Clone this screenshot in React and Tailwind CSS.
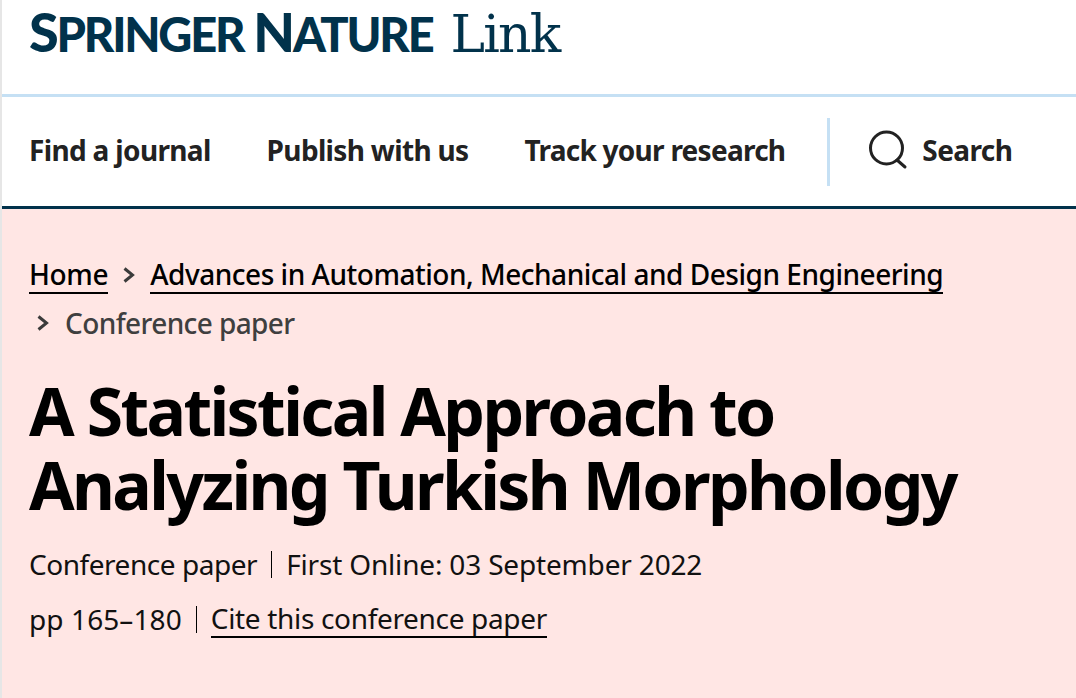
import React from 'react';

const sans = "font-['Noto_Sans',sans-serif]";

function Chevron({ className }) {
  return (
    <svg viewBox="0 0 12 18" width="12" height="18" fill="none" stroke="#3b3b3b" strokeWidth="3" className={className}>
      <path d="M1.5 2.5 L9.5 9 L1.5 15.5" />
    </svg>
  );
}

function SearchIcon() {
  return (
    <svg viewBox="0 0 40 40" width="40" height="40" fill="none" stroke="#222" strokeWidth="3" strokeLinecap="round">
      <circle cx="18.5" cy="18" r="16" />
      <path d="M29 30 L37 37" />
    </svg>
  );
}

export default function App() {
  return (
    <div className={`${sans} h-[698px] w-[1076px] overflow-hidden bg-white border-l-2 border-[#e6e6e6]`}>
      {/* Logo */}
      <div className="h-[94px] pl-[27px] pt-[1px] flex items-start">
        <div className="flex items-baseline text-[#01324b] leading-[62px] font-['Lato',sans-serif] font-black">
          <span className="text-[54px] tracking-[-2.2px]">S</span>
          <span className="text-[47px] tracking-[-2.2px]">PRINGER</span>
          <span className="text-[54px] tracking-[-2.2px] ml-[10px]">N</span>
          <span className="text-[47px] tracking-[-2.2px]">ATURE</span>
          <span className="font-['DejaVu_Serif',serif] text-[52px] font-normal tracking-[-1.8px] ml-[18px]">Link</span>
        </div>
      </div>

      {/* Nav */}
      <div className="h-[115px] border-t-[3px] border-b-[3px] border-t-[#c5e0f4] border-b-[#01324b] flex items-center pl-[27px]">
        <nav className="flex items-center gap-[56px] text-[28px] font-bold text-[#222] tracking-[-0.66px] h-full pb-[3px]">
          <span>Find a journal</span>
          <span>Publish with us</span>
          <span className="tracking-[-0.74px]">Track your research</span>
        </nav>
        <div className="w-[3px] h-[68px] bg-[#c5e0f4] ml-[42px]" />
        <div className="flex items-center ml-[38px] gap-[14px] text-[28px] font-bold text-[#222] tracking-[-0.6px] pb-[3px]">
          <SearchIcon />
          <span>Search</span>
        </div>
      </div>

      {/* Article header */}
      <div className="h-[489px] bg-[#ffe6e4] pl-[27px] pt-[44px]">
        <div className="text-[28px] font-medium leading-[44px] tracking-[-0.48px] text-black">
          <div className="flex items-center h-[44px]">
            <span className="border-b-[2px] border-black leading-[35px] tracking-[-0.36px]">Home</span>
            <Chevron className="mx-[15px]" />
            <span className="border-b-[2px] border-black leading-[35px]">Advances in Automation, Mechanical and Design Engineering</span>
          </div>
          <div className="flex items-center h-[52px] text-[#3f3f3f] tracking-[-0.6px]">
            <Chevron className="ml-[8px] mr-[16px]" />
            <span>Conference paper</span>
          </div>
        </div>

        <h1 className="text-[66px] font-bold leading-[74px] tracking-[-2.6px] text-black mt-[24px]">
          A Statistical Approach to<br />Analyzing Turkish Morphology
        </h1>

        <div className="mt-[16px] text-[28px] text-[#111] leading-[54px]">
          <div className="flex items-center h-[54px]">
            <span className="tracking-[-0.46px]">Conference paper</span>
            <span className="w-px h-[27px] bg-black mx-[14px]" />
            <span className="tracking-[-0.17px]">First Online: 03 September 2022</span>
          </div>
          <div className="flex items-center h-[54px] pt-[2px]">
            <span className="tracking-[0.1px]">pp 165–180</span>
            <span className="w-px h-[27px] bg-black mx-[14px]" />
            <span className="border-b-[2px] border-black leading-[35px] tracking-[-0.33px]">Cite this conference paper</span>
          </div>
        </div>
      </div>
    </div>
  );
}
